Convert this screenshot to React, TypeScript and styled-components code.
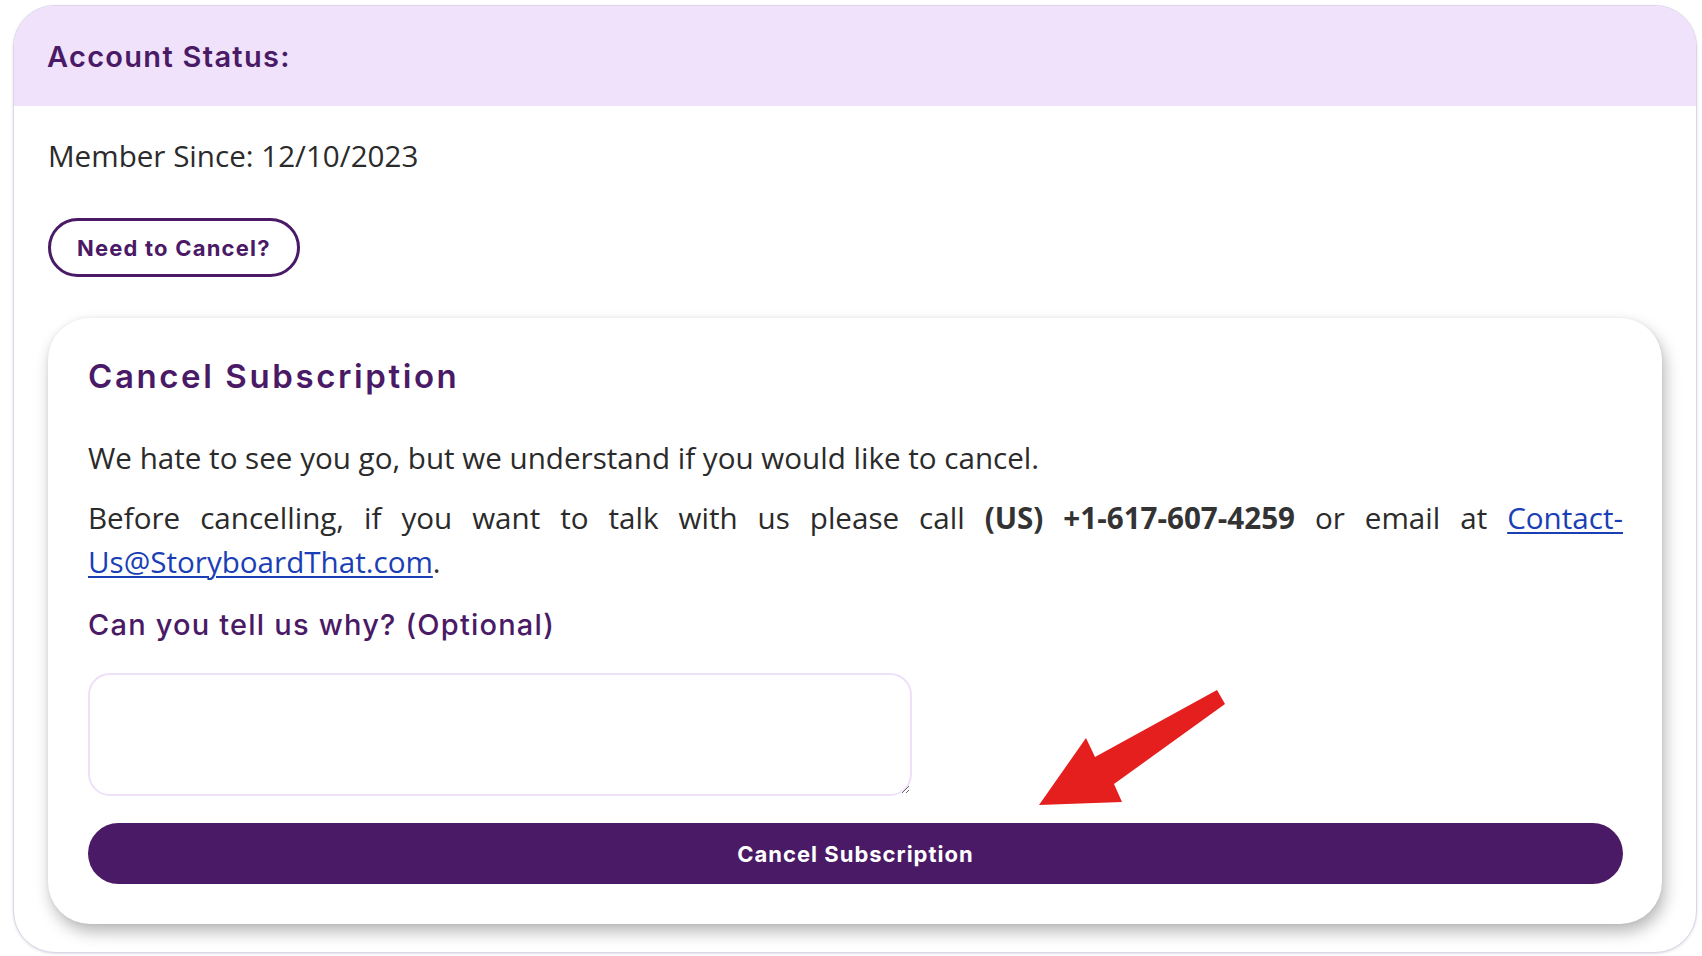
import React from 'react';
import styled, { createGlobalStyle } from 'styled-components';

const GlobalStyle = createGlobalStyle`
  html, body {
    margin: 0;
    padding: 0;
    background: #ffffff;
  }
  body {
    font-family: "Open Sans", "Noto Sans", sans-serif;
    color: #2b2b2b;
  }
  * { box-sizing: border-box; }
`;

const headingFont = `"Inter", "Noto Sans", sans-serif`;
const purple = '#4a1a66';

const Page = styled.div`
  padding: 5px 5px 2px 13px;
  position: relative;
`;

const AccountCard = styled.section`
  border: 1px solid #ddd3ea;
  border-radius: 42px;
  overflow: hidden;
  background: #fff;
  box-shadow: 0 1px 3px rgba(0, 0, 0, 0.12);
`;

const CardHeader = styled.header`
  height: 100px;
  background: #f0e2fb;
  display: flex;
  align-items: center;
  padding: 0 33px;
`;

const HeaderTitle = styled.h2`
  margin: 0;
  font-family: ${headingFont};
  font-weight: 600;
  font-size: 29px;
  letter-spacing: 1.3px;
  color: ${purple};
`;

const CardBody = styled.div`
  padding: 30px 34px 28px 34px;
  display: flex;
  flex-direction: column;
  align-items: flex-start;
`;

const MemberLine = styled.p`
  margin: 0;
  font-size: 29.6px;
  line-height: 40px;
  color: #2b2b2b;
`;

const OutlineButton = styled.button`
  margin-top: 42px;
  height: 59px;
  padding: 0 26px;
  border: 3px solid ${purple};
  border-radius: 30px;
  background: #fff;
  color: ${purple};
  font-family: ${headingFont};
  font-weight: 700;
  font-size: 22px;
  letter-spacing: 1.2px;
  cursor: pointer;
`;

const CancelPanel = styled.div`
  margin-top: 41px;
  align-self: stretch;
  background: #fff;
  border-radius: 42px;
  box-shadow: 3px 8px 16px rgba(0, 0, 0, 0.28), 0 0 4px rgba(0, 0, 0, 0.06);
  padding: 38px 39px 40px 40px;
  display: flex;
  flex-direction: column;
`;

const PanelTitle = styled.h3`
  margin: 0;
  font-family: ${headingFont};
  font-weight: 600;
  font-size: 33px;
  line-height: 40px;
  letter-spacing: 2.6px;
  color: ${purple};
`;

const Paragraph = styled.p<{ $gap: number }>`
  margin: ${(p) => p.$gap}px 0 0;
  font-size: 29.6px;
  line-height: 44px;
  text-align: justify;
  color: #2b2b2b;
`;

const Strong = styled.strong`
  font-weight: 700;
  color: #333;
`;

const MailLink = styled.a`
  color: #1a3fb5;
  text-decoration: underline;
  text-underline-offset: 3px;
  text-decoration-thickness: 2px;
`;

const Question = styled.h4`
  margin: 23px 0 0;
  font-family: ${headingFont};
  font-weight: 500;
  font-size: 29px;
  line-height: 36px;
  letter-spacing: 1.2px;
  color: ${purple};
`;

const ReasonBox = styled.textarea`
  display: block;
  margin-top: 30px;
  width: 824px;
  height: 123px;
  border: 2px solid #efe0fa;
  border-radius: 22px;
  padding: 12px 16px;
  font-family: "Open Sans", sans-serif;
  font-size: 20px;
  outline: none;
`;

const SolidButton = styled.button`
  margin-top: 27px;
  height: 61px;
  width: 100%;
  border: none;
  border-radius: 31px;
  background: ${purple};
  color: #fff;
  font-family: ${headingFont};
  font-weight: 700;
  font-size: 22px;
  letter-spacing: 1px;
  cursor: pointer;
`;

const Arrow = styled.svg`
  position: absolute;
  left: 1030px;
  top: 690px;
  pointer-events: none;
`;

const App = () => {
  return (
    <Page>
      <GlobalStyle />
      <AccountCard>
        <CardHeader>
          <HeaderTitle>Account Status:</HeaderTitle>
        </CardHeader>
        <CardBody>
          <MemberLine>Member Since: 12/10/2023</MemberLine>
          <OutlineButton>Need to Cancel?</OutlineButton>
          <CancelPanel>
            <PanelTitle>Cancel Subscription</PanelTitle>
            <Paragraph $gap={40}>
              We hate to see you go, but we understand if you would like to cancel.
            </Paragraph>
            <Paragraph $gap={16}>
              Before cancelling, if you want to talk with us please call{' '}
              <Strong>(US) +1-617-607-4259</Strong> or email at{' '}
              <MailLink href="#">Contact-Us@StoryboardThat.com</MailLink>.
            </Paragraph>
            <Question>Can you tell us why? (Optional)</Question>
            <ReasonBox />
            <SolidButton>Cancel Subscription</SolidButton>
          </CancelPanel>
        </CardBody>
      </AccountCard>
      {/* red annotation arrow pointing at the button */}
      <Arrow width="200" height="130" viewBox="0 0 200 130">
        <polygon
          fill="#e51e1e"
          points="187,0 195,14 84,94 92,112 9,115 56,48 65,67"
        />
      </Arrow>
    </Page>
  );
};

export default App;
